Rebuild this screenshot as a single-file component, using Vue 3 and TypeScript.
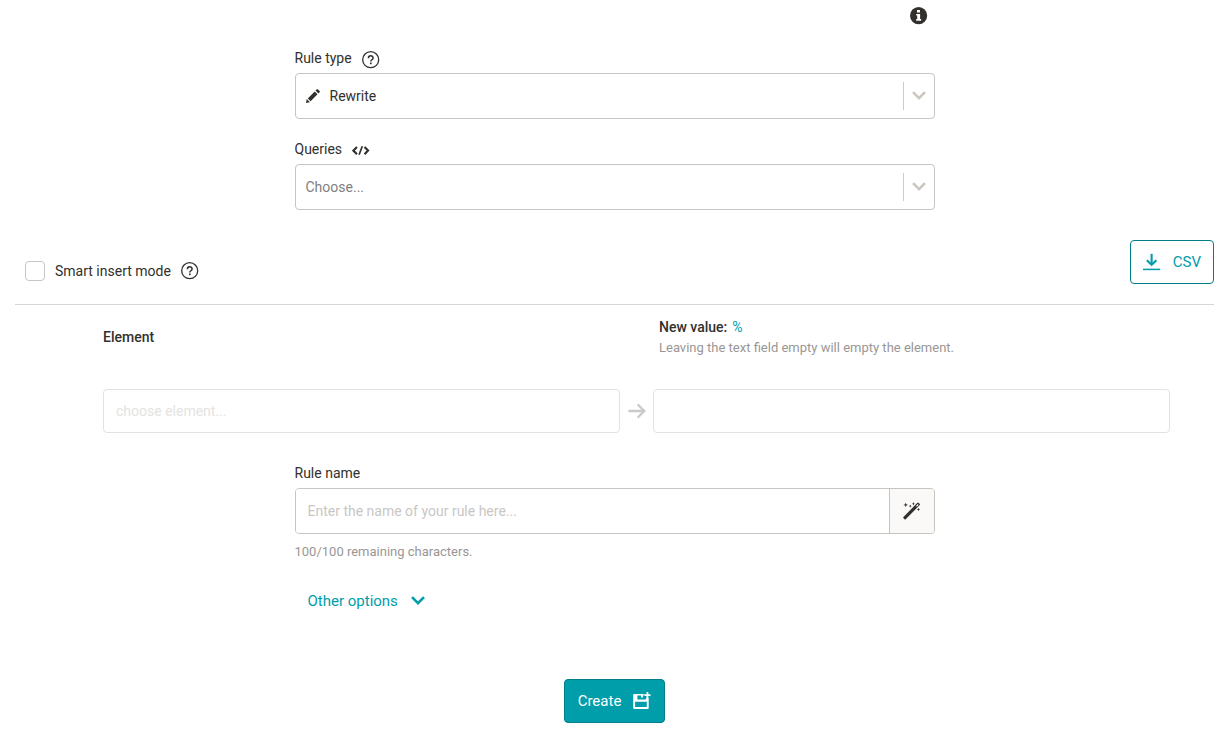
<script setup lang="ts">
import { computed, ref } from 'vue'

const MAX_NAME = 100
const ruleType = ref('rewrite')
const query = ref('')
const smartInsert = ref(false)
const element = ref('')
const newValue = ref('')
const ruleName = ref('')
const remaining = computed(() => MAX_NAME - ruleName.value.length)
</script>

<template>
  <main class="page">
    <form class="rule-form" @submit.prevent>
      <div class="column top">
        <div class="info-bar">
          <button type="button" class="icon-button" aria-label="Information">
            <svg width="18" height="18" viewBox="0 0 18 18">
              <circle cx="8.6" cy="8.7" r="8.6" fill="#32302d" />
              <path fill="#fff" d="M7 3.1h3v2.5H7zM6.2 6.9h3.9v5.2h1v1.7H6.2v-1.7h1V8.6h-1z" />
            </svg>
          </button>
        </div>

        <div class="field">
          <div class="label-row">
            <label for="rule-type">Rule type</label>
            <button type="button" class="icon-button" aria-label="Help on rule types">
              <svg width="18" height="18" viewBox="0 0 18 18" fill="none" stroke="#32302d">
                <circle cx="8.7" cy="8.7" r="8" stroke-width="1.3" />
                <path d="M6.4 7.2C6.4 4 11.1 4.1 11.1 7c0 1.7-2.3 1.8-2.3 3.4" stroke-width="1.5" />
                <path d="M8.8 11.5v1.7" stroke-width="1.7" />
              </svg>
            </button>
          </div>
          <div class="select-box with-icon">
            <svg class="pencil" width="14" height="14" viewBox="0 0 14 14" fill="#32302d">
              <path d="M0 14l.8-3.9 3.1 3.1zM1.8 9.4l6.9-6.9 2.8 2.8-6.9 6.9zM9.5 1.6L10.9.2q.4-.3.8 0l2.1 2.1q.3.4 0 .8l-1.4 1.4z" />
            </svg>
            <select id="rule-type" v-model="ruleType">
              <option value="rewrite">Rewrite</option>
            </select>
            <span class="indicator">
              <svg width="14" height="10" viewBox="0 0 14 10" fill="none" stroke="#ccc6c0" stroke-width="2.6">
                <path d="M1 1.2l6 6 6-6" />
              </svg>
            </span>
          </div>
        </div>

        <div class="field">
          <div class="label-row">
            <label for="queries">Queries</label>
            <button type="button" class="icon-button" aria-label="Show code">
              <svg width="18" height="18" viewBox="0 0 18 18" fill="none" stroke="#32302d" stroke-width="2.1">
                <path d="M5 4.9L1.4 8.6 5 12.3M12.5 4.9l3.6 3.7-3.6 3.7" />
                <path d="M10.3 4.2L7.1 12.8" stroke-width="1.7" />
              </svg>
            </button>
          </div>
          <div class="select-box">
            <select id="queries" v-model="query" class="empty">
              <option value="">Choose...</option>
            </select>
            <span class="indicator">
              <svg width="14" height="10" viewBox="0 0 14 10" fill="none" stroke="#ccc6c0" stroke-width="2.6">
                <path d="M1 1.2l6 6 6-6" />
              </svg>
            </span>
          </div>
        </div>
      </div>

      <div class="toolbar">
        <div class="smart">
          <input id="smart-insert" v-model="smartInsert" type="checkbox" />
          <label for="smart-insert">Smart insert mode</label>
          <button type="button" class="icon-button" aria-label="Help on smart insert mode">
            <svg width="18" height="18" viewBox="0 0 18 18" fill="none" stroke="#32302d">
              <circle cx="8.7" cy="8.7" r="8" stroke-width="1.3" />
              <path d="M6.4 7.2C6.4 4 11.1 4.1 11.1 7c0 1.7-2.3 1.8-2.3 3.4" stroke-width="1.5" />
              <path d="M8.8 11.5v1.7" stroke-width="1.7" />
            </svg>
          </button>
        </div>
        <button type="button" class="button outline">
          <svg width="18" height="18" viewBox="0 0 18 18" fill="none" stroke="#009dab" stroke-width="2.1">
            <path d="M8.6 .8v10.8" />
            <path d="M3.8 7.2l4.8 4.6 4.8-4.6" />
            <path d="M0 16.4h17.2" stroke-width="1.5" />
          </svg>
          <span>CSV</span>
        </button>
      </div>

      <section class="mapping">
        <label class="element-title" for="element">Element</label>
        <div class="value-title">
          <div class="value-line">
            <label for="new-value">New value:</label>
            <a href="#percent">%</a>
          </div>
          <small>Leaving the text field empty will empty the element.</small>
        </div>
        <input id="element" v-model="element" class="pale" type="text" placeholder="choose element..." />
        <svg class="arrow" width="18" height="16" viewBox="0 0 18 16" fill="none" stroke="#cacac8" stroke-width="2.4" stroke-linecap="round">
          <path d="M1.3 8h14.8M10.3 2l6 6-6 6" />
        </svg>
        <input id="new-value" v-model="newValue" class="pale" type="text" />
      </section>

      <div class="column">
        <label class="name-label" for="rule-name">Rule name</label>
        <div class="name-group">
          <input id="rule-name" v-model="ruleName" type="text" :maxlength="MAX_NAME" placeholder="Enter the name of your rule here..." />
          <button type="button" class="wand" aria-label="Generate a name">
            <svg width="18" height="18" viewBox="0 0 18 18" fill="#32302d">
              <path d="M.4 15L14.2 1q.6-.6 1.2-.3l1.4 1.4q.3.6-.3 1.2L2.7 17.2q-.6.5-1.2 0L.4 16.1q-.4-.5 0-1.1zM13 3.9l.8.8 1.8-1.8-.8-.8z" fill-rule="evenodd" />
              <path d="M2.7.6l.6 1.7 1.7.6-1.7.6-.6 1.7-.6-1.7L.4 2.9l1.7-.6zM7.2 2.5l.5 1.2 1.2.4-1.2.5-.5 1.2-.4-1.2-1.2-.5 1.2-.4zM10.4.1l.5 1.3 1.2.4-1.2.5-.5 1.2-.5-1.2-1.2-.5 1.2-.4zM15.5 5.7l.5 1.3 1.2.5-1.2.5-.5 1.3L15 8l-1.2-.5L15 7z" />
            </svg>
          </button>
        </div>
        <small class="remaining">{{ remaining }}/{{ MAX_NAME }} remaining characters.</small>
        <button type="button" class="other">
          <span>Other options</span>
          <svg width="14" height="10" viewBox="0 0 14 10" fill="none" stroke="#009dab" stroke-width="2.6">
            <path d="M1 1.2l6 6 6-6" />
          </svg>
        </button>
      </div>

      <div class="actions">
        <button type="submit" class="button primary">
          <span>Create</span>
          <svg width="18" height="18" viewBox="0 0 18 18">
            <path
              fill="#fff"
              fill-rule="evenodd"
              d="M1.2 2h9.6v1.5H9.9v2.1H8V3.5H4.4v4h8.5V6h2.8v9.9q0 1-1 1H1.2q-1 0-1-1V3q0-1 1-1zM2.1 9.7v5.4h11.7V9.7z"
            />
            <path d="M14.4 0v6.2M11.3 3.1h6.2" fill="none" stroke="#fff" stroke-width="1.8" />
          </svg>
        </button>
      </div>
    </form>
  </main>
</template>

<style>
body {
  margin: 0;
  background: #fff;
}
</style>

<style scoped>
.page {
  padding: 0 5px 0 15px;
  color: #32302d;
  font: 14px/20px Roboto, "Liberation Sans", sans-serif;
}

.page *,
.page *::before {
  box-sizing: border-box;
}

button,
input,
select {
  margin: 0;
  font: inherit;
  color: inherit;
}

button {
  cursor: pointer;
}

svg {
  display: block;
  flex: none;
}

.column {
  max-width: 640px;
  margin: 0 auto;
}

.icon-button {
  padding: 0;
  border: 0;
  background: none;
}

.info-bar {
  display: flex;
  justify-content: flex-end;
  padding: 7px 7px 0 0;
  height: 48px;
}

.info-bar .icon-button {
  height: 18px;
}

.field {
  margin-bottom: 20px;
}

.label-row {
  display: flex;
  gap: 10px;
  height: 25px;
}

.label-row .icon-button {
  height: 18px;
  margin-top: 3px;
}

.select-box {
  position: relative;
}

.select-box select {
  display: block;
  width: 100%;
  height: 46px;
  padding: 0 40px 0 10px;
  appearance: none;
  background: #fff;
  border: 1px solid #c8c4c0;
  border-radius: 4px;
}

.select-box select.empty {
  color: #808080;
}

.select-box.with-icon select {
  padding-left: 34px;
}

.pencil {
  position: absolute;
  top: 16px;
  left: 11px;
  pointer-events: none;
}

.indicator {
  position: absolute;
  top: 9px;
  right: 0;
  display: flex;
  align-items: center;
  width: 32px;
  height: 28px;
  padding-left: 8px;
  border-left: 1px solid #cccccc;
  pointer-events: none;
}

.toolbar {
  display: flex;
  justify-content: space-between;
  margin-top: 30px;
  padding-bottom: 20px;
  border-bottom: 1px solid #d6d6d4;
}

.smart {
  display: flex;
  align-items: center;
  gap: 10px;
  height: 20px;
  margin: 21px 0 0 10px;
}

.smart input {
  width: 20px;
  height: 20px;
  appearance: none;
  border: 1px solid #c8c4c0;
  border-radius: 4px;
  background: #fff;
}

.smart input:checked {
  background: #009dab;
}

.button {
  display: flex;
  align-items: center;
  gap: 12px;
  height: 44px;
  padding: 0 12px;
  border: 1px solid #007e89;
  border-radius: 4px;
  font-size: 15px;
}

.outline {
  color: #009dab;
  background: #fff;
}

.primary {
  padding: 0 13px;
  color: #fff;
  background: #009dab;
}

.mapping {
  display: grid;
  grid-template-columns: 1fr 33px 1fr;
  align-items: center;
  margin: 12px 44px 30px 88px;
}

.mapping label {
  font-weight: 500;
}

.element-title {
  grid-column: 1;
  align-self: start;
  margin-top: 10px;
}

.value-title {
  grid-column: 3;
  height: 72px;
  padding-left: 6px;
}

.value-line {
  display: flex;
  gap: 5px;
}

.value-line a {
  color: #009dab;
  text-decoration: none;
}

small {
  display: block;
  font-size: 13px;
  color: #999795;
}

.value-title small {
  margin-top: 1px;
}

.pale {
  width: 100%;
  min-width: 0;
  height: 44px;
  padding: 0 12px;
  border: 1px solid #e2e2e0;
  border-radius: 4px;
  background: #fff;
}

.pale::placeholder {
  color: #e4e3e1;
}

.arrow {
  justify-self: center;
}

.name-label {
  display: block;
  height: 25px;
}

.name-group {
  display: flex;
  height: 46px;
  border: 1px solid #c8c4c0;
  border-radius: 4px;
  overflow: hidden;
}

.name-group input {
  flex: 1;
  min-width: 0;
  padding: 0 12px;
  border: 0;
  background: #fff;
}

.name-group input::placeholder {
  color: #c8c7c5;
}

.wand {
  display: grid;
  place-items: center;
  width: 45px;
  padding: 0;
  border: 0;
  border-left: 1px solid #c8c4c0;
  background: #faf9f7;
}

.remaining {
  margin-top: 8px;
}

.other {
  display: flex;
  align-items: center;
  gap: 13px;
  height: 44px;
  margin-top: 17px;
  padding: 0 13px;
  border: 0;
  background: none;
  color: #009dab;
  font-size: 15px;
}

.actions {
  display: flex;
  justify-content: center;
  margin-top: 56px;
}
</style>
